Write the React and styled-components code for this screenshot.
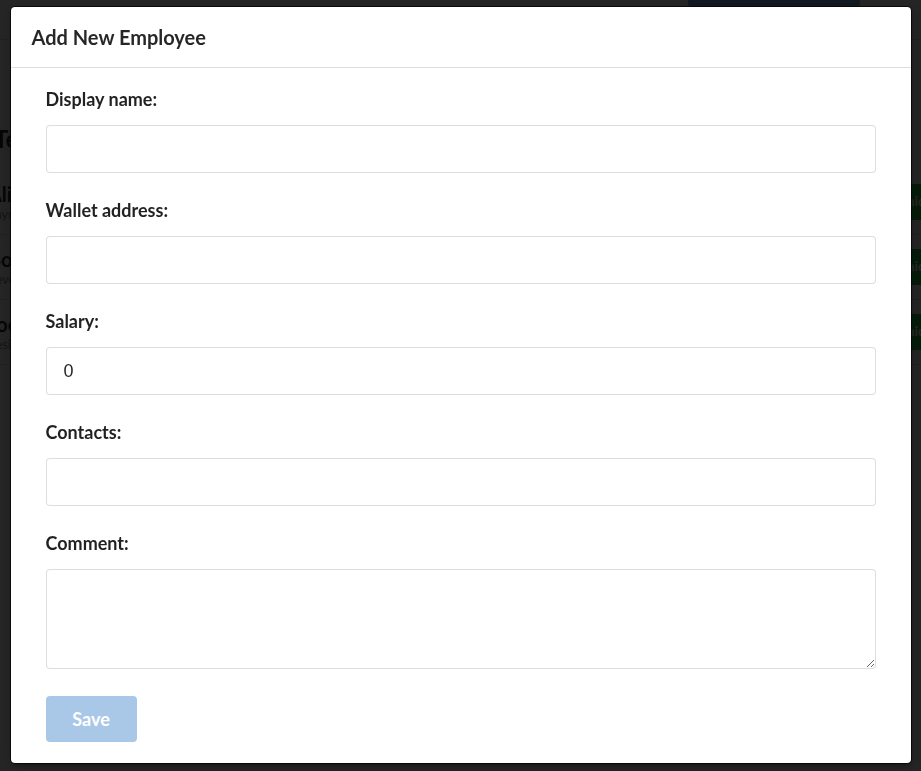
import React, { useState } from "react";
import styled, { createGlobalStyle } from "styled-components";

const GlobalStyle = createGlobalStyle`
	* { box-sizing: border-box; }
	html, body {
		margin: 0;
		padding: 0;
		background: #fff;
		font-family: Lato, "Liberation Sans", sans-serif;
		font-size: 14px;
		color: rgba(0, 0, 0, 0.87);
	}
`;

const backgroundRows = [
	{ name: "Alice", sub: "payroll" },
	{ name: "Bob", sub: "developer" },
	{ name: "Joe", sub: "designer" },
];

const App = () => {
	const [form, setForm] = useState({
		name: "",
		wallet: "",
		salary: "0",
		contacts: "",
		comment: "",
	});

	const update = (key) => ({ target }) =>
		setForm((prev) => ({ ...prev, [key]: target.value }));

	return (
		<>
			<GlobalStyle />
			<Page>
				<TopBar>
					<TopButton />
				</TopBar>
				<PageTitle>Team</PageTitle>
				{backgroundRows.map((row) => (
					<PageRow key={row.name}>
						<div>
							<RowName>{row.name}</RowName>
							<RowSub>{row.sub}</RowSub>
						</div>
						<RowBadge>Paid</RowBadge>
					</PageRow>
				))}
			</Page>
			<Dimmer>
				<Modal>
					<ModalHeader>Add New Employee</ModalHeader>
					<ModalContent>
						<Form onSubmit={(e) => e.preventDefault()}>
							<Field>
								<Label>Display name:</Label>
								<Input value={form.name} onChange={update("name")} />
							</Field>
							<Field>
								<Label>Wallet address:</Label>
								<Input value={form.wallet} onChange={update("wallet")} />
							</Field>
							<Field>
								<Label>Salary:</Label>
								<Input value={form.salary} onChange={update("salary")} />
							</Field>
							<Field>
								<Label>Contacts:</Label>
								<Input value={form.contacts} onChange={update("contacts")} />
							</Field>
							<Field>
								<Label>Comment:</Label>
								<TextArea value={form.comment} onChange={update("comment")} />
							</Field>
							<SaveBtn type="submit" disabled>
								Save
							</SaveBtn>
						</Form>
					</ModalContent>
				</Modal>
			</Dimmer>
		</>
	);
};

// page behind the dimmer
const Page = styled.div`
	width: 100%;
	height: 771px;
	overflow: hidden;
	background: #fff;
`;

const TopBar = styled.div`
	height: 40px;
	display: flex;
	justify-content: flex-end;
	padding: 0 61px 0 0;
	border-bottom: 1px solid #ddd;
`;

const TopButton = styled.div`
	width: 172px;
	height: 34px;
	margin-top: -27px;
	border-radius: 4px;
	background: #7aa7de;
`;

const PageTitle = styled.h2`
	margin: 0;
	padding: 84px 0 0 0;
	font-size: 24px;
	height: 130px;
	margin-left: -6px;
`;

const PageRow = styled.div`
	height: 65px;
	display: flex;
	align-items: center;
	justify-content: space-between;
	border-bottom: 1px solid #ddd;
	margin-left: -12px;
`;

const RowName = styled.div`
	font-size: 20px;
	font-weight: 700;
`;

const RowSub = styled.div`
	font-size: 13px;
	color: #888;
`;

const RowBadge = styled.div`
	width: 60px;
	height: 36px;
	margin-right: -30px;
	background: #21ba45;
	color: #fff;
	font-weight: 700;
	padding: 8px;
`;

// overlay + modal
const Dimmer = styled.div`
	position: fixed;
	inset: 0;
	background: rgba(0, 0, 0, 0.855);
	display: flex;
	align-items: flex-start;
	justify-content: center;
	padding-top: 7px;
`;

const Modal = styled.div`
	width: 900px;
	background: #fff;
	border-radius: 4px;
	box-shadow: 0 0 0 1px rgba(0, 0, 0, 0.7), 1px 3px 3px 0 rgba(0, 0, 0, 0.2),
		1px 3px 15px 2px rgba(0, 0, 0, 0.2);
`;

const ModalHeader = styled.div`
	padding: 17px 21px;
	font-size: 20px;
	line-height: 26px;
	font-weight: 700;
	color: rgba(0, 0, 0, 0.85);
	border-bottom: 1px solid rgba(34, 36, 38, 0.15);
`;

const ModalContent = styled.div`
	padding: 20px 35px 21px;
`;

const Form = styled.form`
	display: flex;
	flex-direction: column;
	align-items: flex-start;
	gap: 26px;
`;

const Field = styled.div`
	display: flex;
	flex-direction: column;
	width: 100%;
`;

const Label = styled.label`
	font-size: 18px;
	line-height: 22px;
	font-weight: 700;
	color: rgba(0, 0, 0, 0.87);
	margin-bottom: 15px;
`;

const Input = styled.input`
	width: 100%;
	height: 48px;
	padding: 0 17px;
	border: 1px solid rgba(34, 36, 38, 0.15);
	border-radius: 4px;
	font-family: "Liberation Sans", Arial, sans-serif;
	font-size: 18px;
	color: rgba(0, 0, 0, 0.87);
	outline: none;
	&:focus {
		border-color: #85b7d9;
	}
`;

const TextArea = styled.textarea`
	width: 100%;
	height: 100px;
	padding: 12px 17px;
	border: 1px solid rgba(34, 36, 38, 0.15);
	border-radius: 4px;
	font-family: "Liberation Sans", Arial, sans-serif;
	font-size: 16px;
	outline: none;
	resize: vertical;
`;

const SaveBtn = styled.button`
	width: 91px;
	height: 46px;
	margin-top: 1px;
	border: none;
	border-radius: 4px;
	background: #a9c8e8;
	color: #fff;
	font-family: Lato, sans-serif;
	font-size: 18px;
	font-weight: 700;
	cursor: default;
`;

export default App;
